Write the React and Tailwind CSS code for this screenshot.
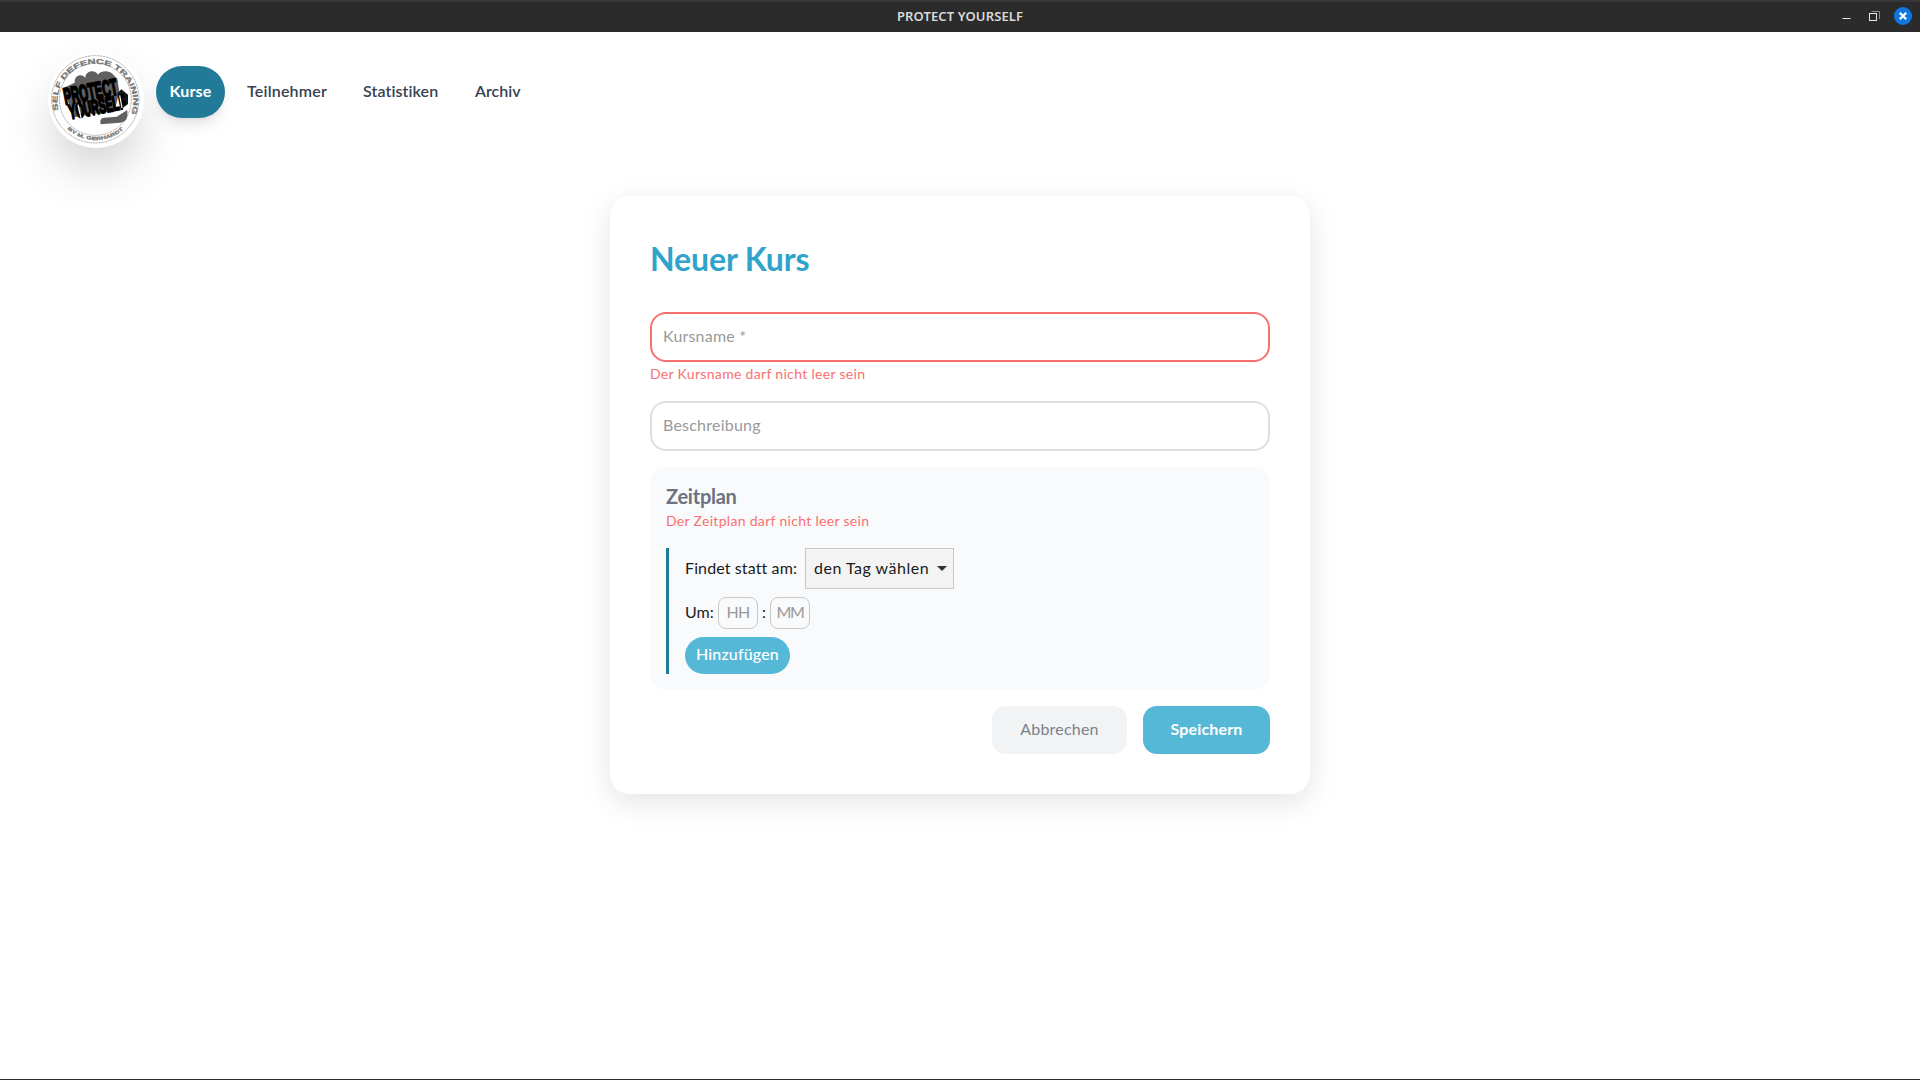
import React from "react";

function Logo() {
  return (
    <svg viewBox="0 0 288 288" className="h-24 w-24 overflow-visible" role="img" aria-label="Protect Yourself">
      <defs>
        <path id="ringTop" d="M 31 175 A 114 114 0 1 1 253 175" />
        <path id="ringBottom" d="M 58 231 A 124 124 0 0 0 227 231" />
      </defs>
      <circle cx="143" cy="142" r="142" fill="#fff" />
      <circle cx="142" cy="142" r="131" fill="none" stroke="#8a8a8a" strokeWidth="2" strokeDasharray="7 2" />
      <circle cx="142" cy="142" r="108" fill="none" stroke="#8a8a8a" strokeWidth="2" strokeDasharray="7 2" />
      <g fill="#757575" stroke="#757575" strokeWidth="0.8" fontFamily="'Liberation Sans', sans-serif" fontWeight="700">
        <text fontSize="21">
          <textPath href="#ringTop" textLength="422" lengthAdjust="spacingAndGlyphs">SELF DEFENCE TRAINING</textPath>
        </text>
        <text fontSize="14">
          <textPath href="#ringBottom" textLength="184" lengthAdjust="spacingAndGlyphs">BY M. GERHARDT</textPath>
        </text>
      </g>
      <path
        d="M46 108 L80 92 C78 66 106 64 112 78 C112 54 142 52 150 68 C156 54 188 54 196 68 L208 80 L214 120 L200 176 L76 196 Z"
        fill="#606060"
      />
      <path d="M208 124 L220 112 L240 128 L240 156 L222 170 Z" fill="#161616" />
      <g fontFamily="'Liberation Sans', sans-serif" fontWeight="700" fill="#000" stroke="#000" strokeWidth="6" strokeLinejoin="round">
        <text transform="translate(52 158) rotate(-11) scale(0.72 1)" fontSize="70" textLength="226" lengthAdjust="spacingAndGlyphs">PROTECT</text>
        <text transform="translate(66 202) rotate(-11) scale(0.72 1)" fontSize="62" textLength="240" lengthAdjust="spacingAndGlyphs">YOURSELF</text>
      </g>
      <path d="M90 158 L100 202 M128 184 L132 198 M215 130 L222 168" stroke="#fff" strokeWidth="3.5" />
      <path d="M157 208 Q158 197 170 197 L206 194 L238 174 L238 192 Q236 210 216 212 L158 217 Z" fill="#616161" />
    </svg>
  );
}

function TitleBar() {
  return (
    <header className="relative flex h-8 items-center justify-center border-t-2 border-[#363636] bg-[#2b2b2b] pb-px">
      <h1 className="font-['Noto_Sans'] text-[13px] font-semibold tracking-[0.12px] text-[#dadada]">PROTECT YOURSELF</h1>
      <div className="absolute right-2 top-0 flex h-[30px] items-center">
        <svg width="9" height="9" viewBox="0 0 9 9" className="mr-[18px]" aria-label="Minimieren">
          <path d="M0.5 5.5H8.5" stroke="#e6e6e6" />
        </svg>
        <svg width="11" height="11" viewBox="0 0 11 11" className="relative -top-px mr-3.5" aria-label="Wiederherstellen">
          <path d="M2.5 0.5H10.5V8" fill="none" stroke="#8a8a8a" />
          <rect x="0.5" y="2.5" width="7" height="7" fill="none" stroke="#e6e6e6" />
        </svg>
        <svg width="18" height="18" viewBox="0 0 18 18" className="relative -top-px" aria-label="Schließen">
          <circle cx="9" cy="9" r="9" fill="#1077e0" />
          <path d="M5.8 5.8L12.2 12.2M12.2 5.8L5.8 12.2" stroke="#fff" strokeWidth="2.2" />
        </svg>
      </div>
    </header>
  );
}

function Nav() {
  return (
    <nav className="flex h-[164px] items-start pl-12 text-base font-semibold text-[#374151]">
      <div className="mt-5 h-24 w-24 rounded-full shadow-[0_25px_50px_-6px_rgba(0,0,0,0.2)]">
        <Logo />
      </div>
      <div className="mt-[34px] flex h-[52px] items-center">
        <a className="ml-3 flex h-[52px] w-[69px] items-center justify-center rounded-[26px] bg-[#217a98] pb-0.5 font-bold tracking-[0.15px] text-white shadow-[0_10px_15px_-3px_rgba(0,0,0,0.1),0_4px_6px_-4px_rgba(0,0,0,0.1)]">
          Kurse
        </a>
        <a className="ml-[22px] w-[116px] pb-0.5 tracking-[0.2px]">Teilnehmer</a>
        <a className="w-[112px] pb-0.5 tracking-[0.1px]">Statistiken</a>
        <a className="pb-0.5">Archiv</a>
      </div>
    </nav>
  );
}

function CourseForm() {
  return (
    <main className="mx-auto flex h-[598px] w-[700px] flex-col rounded-[20px] bg-white p-10 shadow-[0_8px_30px_rgba(0,0,0,0.11)]">
      <h2 className="h-[76px] text-[32px] font-bold leading-[46px] tracking-[-0.1px] text-[#30a3cb]">Neuer Kurs</h2>
      <input
        placeholder="Kursname *"
        className="h-[50px] w-full shrink-0 rounded-2xl border-2 border-[#f87171] pb-1 pl-[11px] tracking-[0.2px] placeholder:text-[#999]"
      />
      <p className="h-[39px] shrink-0 pt-0.5 text-sm tracking-[0.32px] text-[#f87171]">Der Kursname darf nicht leer sein</p>
      <input
        placeholder="Beschreibung"
        className="h-[50px] w-full shrink-0 rounded-2xl border-2 border-[#dedede] pb-1 pl-[11px] tracking-[0.22px] placeholder:text-[#999]"
      />
      <section className="mt-4 h-[223px] shrink-0 rounded-2xl bg-[#f9fafc] px-4 pt-[15px]">
        <h3 className="h-[29px] text-xl font-bold leading-7 tracking-[-0.25px] text-[#6b7280]">Zeitplan</h3>
        <p className="h-[37px] text-sm leading-5 tracking-[0.31px] text-[#f87171]">Der Zeitplan darf nicht leer sein</p>
        <div className="flex h-[126px] flex-col items-start gap-2 border-l-[3px] border-[#217a98] pl-4 text-[#1a1a1a]">
          <div className="flex items-center">
            <label className="w-[120px] pb-0.5 tracking-[0.12px]">Findet statt am:</label>
            <button className="flex h-[41px] w-[149px] items-center justify-between border border-[#c8c8c8] bg-[#f3f3f3] pl-2 pr-1.5">
              <span className="pb-0.5 tracking-[0.5px]">den Tag wählen</span>
              <svg width="10" height="5" viewBox="0 0 10 5">
                <path d="M0 0H10L5 5Z" fill="#2e3436" />
              </svg>
            </button>
          </div>
          <div className="flex h-8 items-center">
            <span className="w-[33px] pb-0.5">Um:</span>
            <input
              placeholder="HH"
              aria-label="Stunde"
              className="h-8 w-10 rounded-lg border border-[#c8c8c8] pb-[3px] text-center tracking-[-0.6px] placeholder:text-[#999]"
            />
            <span className="w-3 pb-0.5 text-center">:</span>
            <input
              placeholder="MM"
              aria-label="Minute"
              className="h-8 w-10 rounded-lg border border-[#c8c8c8] pb-[3px] text-center tracking-[-1.4px] placeholder:text-[#999]"
            />
          </div>
          <button className="h-[37px] w-[105px] rounded-[18.5px] bg-[#56b8d7] pb-1 font-medium tracking-[0.15px] text-white">Hinzufügen</button>
        </div>
      </section>
      <div className="mt-4 flex justify-end gap-4">
        <button className="h-12 w-[135px] rounded-[14px] bg-[#f2f3f5] pb-0.5 tracking-[0.2px] text-[#7b818b]">Abbrechen</button>
        <button className="h-12 w-[127px] rounded-[14px] bg-[#56b8d7] pb-0.5 font-bold tracking-[0.15px] text-white">Speichern</button>
      </div>
    </main>
  );
}

export default function App() {
  return (
    <div className="h-[1080px] w-[1920px] overflow-hidden border-b border-[#2b2b2b] bg-white font-[Lato,sans-serif] text-base [font-variant-ligatures:none]">
      <TitleBar />
      <Nav />
      <CourseForm />
    </div>
  );
}
